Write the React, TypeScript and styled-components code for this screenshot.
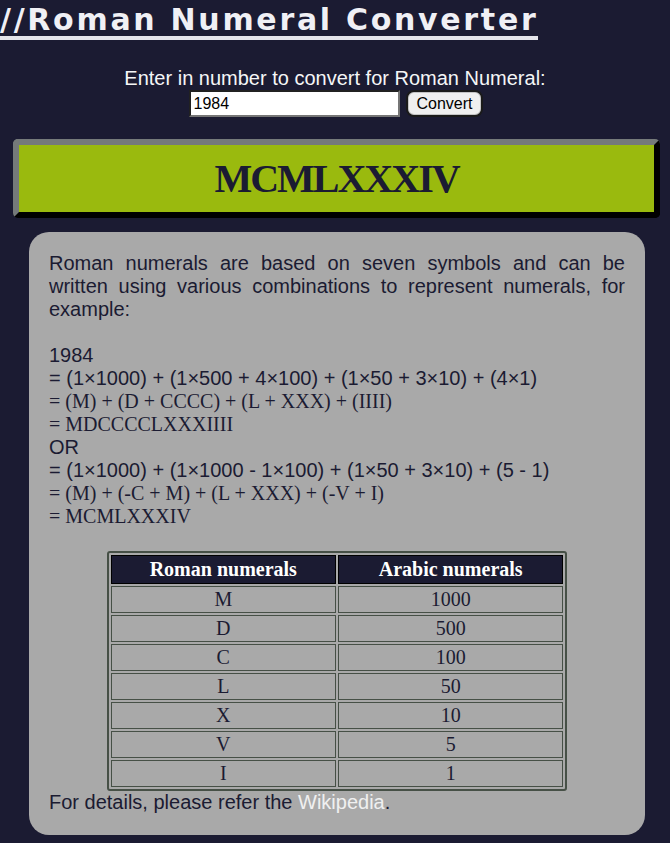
import React, { useState } from "react";
import styled, { createGlobalStyle } from "styled-components";

const GlobalStyle = createGlobalStyle`
  html, body {
    margin: 0;
    padding: 0;
    background: #1b1b32;
  }
  body {
    font-family: "Liberation Sans", Arial, sans-serif;
    color: #f5f6f7;
  }
`;

const Title = styled.h1`
  display: inline-block;
  margin: 0;
  padding-top: 3px;
  font-family: "DejaVu Sans", Verdana, sans-serif;
  font-size: 30px;
  font-weight: bold;
  line-height: 33px;
  letter-spacing: 2.7px;
  color: #f0f0f5;
  border-bottom: 4px solid #e4e4ea;
`;

const Form = styled.form`
  margin-top: 27px;
  text-align: center;
  font-size: 20px;
  line-height: 23px;
`;

const Row = styled.div`
  display: flex;
  justify-content: center;
  align-items: center;
  gap: 6px;
  margin-left: 2px;
`;

const NumberInput = styled.input`
  width: 211px;
  height: 27px;
  box-sizing: border-box;
  padding: 1px 2px;
  font-family: "Liberation Sans", Arial, sans-serif;
  font-size: 16px;
  color: #000;
  background: #fff;
  border: 2px inset #767676;
  outline: none;
`;

const ConvertButton = styled.button`
  box-sizing: border-box;
  height: 27px;
  padding: 1px 8px;
  font-family: "Liberation Sans", Arial, sans-serif;
  font-size: 16px;
  color: #000;
  background: #efefef;
  border: 2px solid #1a1a1a;
  border-radius: 8px;
  box-shadow: inset 0 0 0 1px #c4c4c4;
`;

const Result = styled.h2`
  margin: 22px 10px 0 13px;
  padding: 10px 0;
  height: 47px;
  line-height: 47px;
  text-align: center;
  font-family: "Liberation Serif", "Times New Roman", serif;
  font-size: 40px;
  font-weight: bold;
  letter-spacing: -2px;
  color: #1b1b32;
  background: #9aba0e;
  border: 6px solid;
  border-color: #757a7a #000 #000 #757a7a;
  border-radius: 5px;
`;

const Panel = styled.section`
  margin: 14px 25px 8px 29px;
  padding: 20px 20px 21px;
  background: #a9a9a9;
  border-radius: 20px;
  color: #1b1b32;
  font-size: 20px;
  line-height: 23px;
`;

const Intro = styled.p`
  margin: 0;
  text-align: justify;
`;

const Line = styled.div<{ $serif?: boolean }>`
  font-family: ${(p) =>
    p.$serif
      ? '"Liberation Serif", "Times New Roman", serif'
      : '"Liberation Sans", Arial, sans-serif'};
  font-size: 20px;
  line-height: 23px;
  white-space: nowrap;
`;

const Gap = styled.div`
  height: 23px;
`;

const Table = styled.table`
  width: 80%;
  margin: 23px auto 0;
  border: 2px solid #465046;
  border-radius: 3px;
  border-spacing: 2px;
  font-family: "Liberation Serif", "Times New Roman", serif;
  font-size: 20px;
  line-height: 23px;
`;

const Th = styled.th`
  width: 50%;
  padding: 2px 1px;
  background: #1b1b32;
  color: #fff;
  border: 1px solid #000;
  font-weight: bold;
`;

const Td = styled.td`
  padding: 1px;
  text-align: center;
  color: #1b1b32;
  border: 1px solid #465046;
`;

const Footer = styled.p`
  margin: 0;
`;

const WikiLink = styled.a`
  color: #f0f0f0;
  text-decoration: none;
`;

const symbols: [string, number][] = [
  ["M", 1000],
  ["D", 500],
  ["C", 100],
  ["L", 50],
  ["X", 10],
  ["V", 5],
  ["I", 1],
];

function toRoman(n: number) {
  let rest = n;
  let out = "";
  const table: [string, number][] = [
    ["M", 1000], ["CM", 900], ["D", 500], ["CD", 400],
    ["C", 100], ["XC", 90], ["L", 50], ["XL", 40],
    ["X", 10], ["IX", 9], ["V", 5], ["IV", 4], ["I", 1],
  ];
  for (const [s, v] of table) {
    while (rest >= v) {
      out += s;
      rest -= v;
    }
  }
  return out;
}

export default function App() {
  const [value, setValue] = useState("1984");
  const [result, setResult] = useState(toRoman(1984));

  const convert = (e: React.FormEvent<HTMLFormElement>) => {
    e.preventDefault();
    const n = parseInt(value, 10);
    if (n > 0 && n < 4000) setResult(toRoman(n));
  };

  return (
    <>
      <GlobalStyle />
      <Title>//Roman Numeral Converter</Title>
      <Form onSubmit={convert}>
        <div>Enter in number to convert for Roman Numeral:</div>
        <Row>
          <NumberInput
            type="text"
            value={value}
            onChange={(e) => setValue(e.target.value)}
          />
          <ConvertButton type="submit">Convert</ConvertButton>
        </Row>
      </Form>
      <Result>{result}</Result>
      <Panel>
        <Intro>
          Roman numerals are based on seven symbols and can be written using
          various combinations to represent numerals, for example:
        </Intro>
        <Gap />
        <Line>1984</Line>
        <Line>= (1×1000) + (1×500 + 4×100) + (1×50 + 3×10) + (4×1)</Line>
        <Line $serif>= (M) + (D + CCCC) + (L + XXX) + (IIII)</Line>
        <Line $serif>= MDCCCCLXXXIIII</Line>
        <Line>OR</Line>
        <Line>= (1×1000) + (1×1000 - 1×100) + (1×50 + 3×10) + (5 - 1)</Line>
        <Line $serif>= (M) + (-C + M) + (L + XXX) + (-V + I)</Line>
        <Line $serif>= MCMLXXXIV</Line>
        <Table>
          <thead>
            <tr>
              <Th>Roman numerals</Th>
              <Th>Arabic numerals</Th>
            </tr>
          </thead>
          <tbody>
            {symbols.map(([s, v]) => (
              <tr key={s}>
                <Td>{s}</Td>
                <Td>{v}</Td>
              </tr>
            ))}
          </tbody>
        </Table>
        <Footer>
          For details, please refer the{" "}
          <WikiLink href="#">Wikipedia</WikiLink>.
        </Footer>
      </Panel>
    </>
  );
}
